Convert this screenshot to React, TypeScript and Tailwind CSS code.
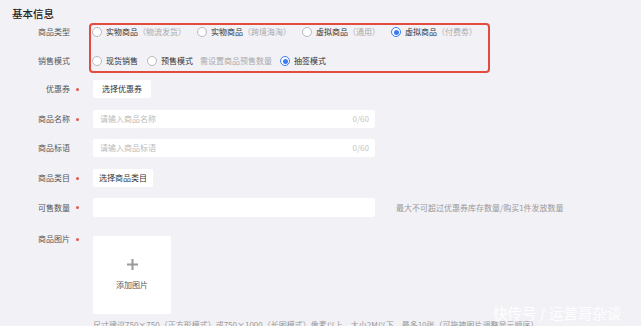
import React from "react";

const font = { fontFamily: '"Noto Sans CJK SC", "Noto Sans", sans-serif' };

function Radio({ checked = false }: { checked?: boolean }) {
  return checked ? (
    <span className="flex h-[10px] w-[10px] shrink-0 items-center justify-center rounded-full border-[1.5px] border-[#3b7cf2] bg-white">
      <span className="h-[5px] w-[5px] rounded-full bg-[#3b7cf2]" />
    </span>
  ) : (
    <span className="h-[10px] w-[10px] shrink-0 rounded-full border border-[#b9b9be] bg-white" />
  );
}

function Opt({ main, sub, checked }: { main: string; sub?: string; checked?: boolean }) {
  return (
    <div className="flex items-center">
      <Radio checked={checked} />
      <span className="ml-[4px] text-[#333]">{main}</span>
      {sub && <span className="text-[#aaa]">{sub}</span>}
    </div>
  );
}

function Label({ text, req }: { text: string; req?: boolean }) {
  return (
    <div className="flex w-[93px] shrink-0 items-center">
      <span className="w-[70px] text-right text-[#555]">{text}</span>
      {req && <span className="ml-[6px] h-[3px] w-[3px] rounded-full bg-[#e0584c]" />}
    </div>
  );
}

export default function App() {
  return (
    <div
      className="relative h-[326px] w-[641px] overflow-hidden bg-[#f2f1f6] text-[8px] leading-[12px]"
      style={font}
    >
      <div className="pl-[12px] pt-[7px] text-[10.5px] font-medium leading-[14px] text-[#222]">基本信息</div>

      {/* type + sale mode */}
      <div className="mt-[2px] flex">
        <div className="flex w-[89px] shrink-0 flex-col pt-[2px]">
          <div className="flex h-[14px] items-center">
            <span className="w-[70px] text-right text-[#555]">商品类型</span>
          </div>
          <div className="mt-[15px] flex h-[14px] items-center">
            <span className="w-[70px] text-right text-[#555]">销售模式</span>
          </div>
        </div>
        <div className="w-[401px] rounded-[4px] border-2 border-[#e24c3e] pb-[3px] pl-[1px]">
          <div className="flex h-[14px] items-center gap-[11px]">
            <Opt main="实物商品" sub="（物流发货）" />
            <Opt main="实物商品" sub="（跨境海淘）" />
            <Opt main="虚拟商品" sub="（通用）" />
            <Opt main="虚拟商品" sub="（付费劵）" checked />
          </div>
          <div className="mt-[15px] flex h-[14px] items-center">
            <Opt main="现货销售" />
            <div className="ml-[9px]">
              <Opt main="预售模式" />
            </div>
            <span className="ml-[7px] text-[#aaa]">需设置商品预售数量</span>
            <div className="ml-[8px]">
              <Opt main="抽签模式" checked />
            </div>
          </div>
        </div>
      </div>

      {/* coupon */}
      <div className="mt-[7px] flex h-[18px] items-center">
        <Label text="优惠券" req />
        <div className="flex h-[18px] w-[58px] items-center justify-center rounded-[2px] bg-white text-[#333]">选择优惠券</div>
      </div>

      {/* name */}
      <div className="mt-[12px] flex h-[18px] items-center">
        <Label text="商品名称" req />
        <div className="flex h-[18px] w-[282px] items-center justify-between rounded-[2px] bg-white pl-[7px] pr-[6px]">
          <span className="text-[#bbb]">请输入商品名称</span>
          <span className="text-[#c4c4c4]">0/60</span>
        </div>
      </div>

      {/* slogan */}
      <div className="mt-[11px] flex h-[18px] items-center">
        <Label text="商品标语" />
        <div className="flex h-[18px] w-[282px] items-center justify-between rounded-[2px] bg-white pl-[7px] pr-[6px]">
          <span className="text-[#bbb]">请输入商品标语</span>
          <span className="text-[#c4c4c4]">0/60</span>
        </div>
      </div>

      {/* category */}
      <div className="mt-[12px] flex h-[18px] items-center">
        <Label text="商品类目" req />
        <div className="flex h-[18px] w-[60px] items-center justify-center rounded-[2px] bg-white text-[#333]">选择商品类目</div>
      </div>

      {/* quantity */}
      <div className="mt-[11px] flex h-[19px] items-center">
        <Label text="可售数量" req />
        <div className="h-[19px] w-[282px] rounded-[2px] bg-white" />
        <span className="ml-[21px] text-[#999]">最大不可超过优惠券库存数量/购买1件发放数量</span>
      </div>

      {/* images */}
      <div className="mt-[19px] flex">
        <div className="-mt-[3px] flex h-[12px] items-center">
          <Label text="商品图片" req />
        </div>
      </div>
      <div className="-mt-[9px] flex">
        <div className="w-[93px] shrink-0" />
        <div className="flex h-[78px] w-[78px] flex-col items-center bg-white pt-[23px]">
          <svg width="11" height="11" viewBox="0 0 11 11">
            <rect x="4.5" y="0" width="2" height="11" fill="#999" />
            <rect x="0" y="4.5" width="11" height="2" fill="#999" />
          </svg>
          <span className="mt-[9px] text-[#555]">添加图片</span>
        </div>
      </div>
      <div className="mt-[5px] whitespace-nowrap pl-[93px] text-[#999]">
        尺寸建议750×750（正方形模式）或750×1000（长图模式）像素以上，大小2M以下，最多10张（可拖拽图片调整显示顺序）
      </div>

      <div className="absolute left-[493px] top-[303px] whitespace-nowrap text-[14.5px] leading-[20px] text-white/90">
        快传号 / 运营哥杂谈
      </div>
    </div>
  );
}
